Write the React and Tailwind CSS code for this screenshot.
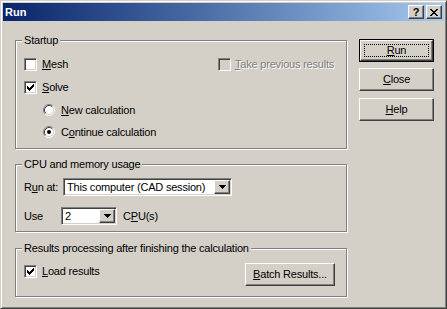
import React from "react";

const raised =
  "border border-t-white border-l-white border-r-[#404040] border-b-[#404040] shadow-[inset_-1px_-1px_0_#808080,inset_1px_1px_0_#d4d0c8]";
const sunken =
  "border border-t-[#808080] border-l-[#808080] border-r-white border-b-white shadow-[inset_1px_1px_0_#404040,inset_-1px_-1px_0_#d4d0c8]";
const group =
  "relative border border-[#808080] shadow-[1px_1px_0_#fff,inset_1px_1px_0_#fff]";

function CheckMark() {
  return (
    <svg width="7" height="7" viewBox="0 0 7 7" shapeRendering="crispEdges">
      <path
        fill="#000"
        d="M6 0h1v1h-1z M5 1h2v1h-2z M0 2h1v1h-1z M4 2h3v1h-3z M0 3h2v1h-2z M3 3h3v1h-3z M0 4h5v1h-5z M1 5h3v1h-3z M2 6h1v1h-1z"
      />
    </svg>
  );
}

function Check({ checked, disabled }) {
  return (
    <div
      className={`w-[13px] h-[13px] shrink-0 flex items-center justify-center ${sunken} ${
        disabled ? "bg-[#d4d0c8]" : "bg-white"
      }`}
    >
      {checked && <CheckMark />}
    </div>
  );
}

function Radio({ checked }) {
  return (
    <svg width="12" height="12" viewBox="0 0 12 12" className="shrink-0">
      <circle cx="6" cy="6" r="4.5" fill="#fff" />
      <path d="M2.11 9.89 A5.5 5.5 0 0 1 9.89 2.11" stroke="#808080" strokeWidth="1" fill="none" />
      <path d="M9.89 2.11 A5.5 5.5 0 0 1 2.11 9.89" stroke="#ffffff" strokeWidth="1" fill="none" />
      <path d="M2.82 9.18 A4.5 4.5 0 0 1 9.18 2.82" stroke="#404040" strokeWidth="1" fill="none" />
      <path d="M9.18 2.82 A4.5 4.5 0 0 1 2.82 9.18" stroke="#d4d0c8" strokeWidth="1" fill="none" />
      {checked && <circle cx="6" cy="6" r="2" fill="#000" />}
    </svg>
  );
}

function Arrow() {
  return (
    <svg width="7" height="4" viewBox="0 0 7 4" shapeRendering="crispEdges">
      <path fill="#000" d="M0 0h7v1h-7z M1 1h5v1h-5z M2 2h3v1h-3z M3 3h1v1h-1z" />
    </svg>
  );
}

function Combo({ width, text }) {
  return (
    <div className={`h-[18px] bg-white flex items-stretch ${sunken}`} style={{ width }}>
      <div className="flex-1 flex items-center pl-[3px] leading-none">{text}</div>
      <div className={`w-[16px] my-[1px] mr-[1px] flex items-center justify-center bg-[#d4d0c8] ${raised}`}>
        <Arrow />
      </div>
    </div>
  );
}

function Legend({ children }) {
  return (
    <span className="absolute left-[6px] top-[-7px] px-[2px] bg-[#d4d0c8] leading-[13px]">
      {children}
    </span>
  );
}

function Button({ children, className = "", isDefault }) {
  if (isDefault) {
    return (
      <div className={`border border-black ${className}`}>
        <div className={`relative h-full flex items-center justify-center ${raised}`}>
          <div className="absolute inset-[3px] border border-dotted border-black" />
          <span>{children}</span>
        </div>
      </div>
    );
  }
  return (
    <div className={`flex items-center justify-center ${raised} ${className}`}>
      <span>{children}</span>
    </div>
  );
}

export default function App() {
  return (
    <div className="w-[447px] h-[309px] bg-[#d4d0c8] border border-t-[#d4d0c8] border-l-[#d4d0c8] border-r-[#404040] border-b-[#404040] shadow-[inset_1px_1px_0_#fff,inset_-1px_-1px_0_#808080] p-[2px] flex flex-col font-['Liberation_Sans',Arial,sans-serif] text-[11px] tracking-[-0.2px] text-black leading-[13px] overflow-hidden">
      {/* Title bar */}
      <div className="h-[18px] shrink-0 flex items-center bg-linear-to-r from-[#0a246a] to-[#a6caf0] pl-[2px] pr-[2px]">
        <span className="text-white font-bold text-[11px] tracking-normal">Run</span>
        <div className="ml-auto flex gap-[2px]">
          <div className={`w-[16px] h-[14px] bg-[#d4d0c8] flex items-center justify-center ${raised}`}>
            <span className="font-bold text-[11px] leading-none">?</span>
          </div>
          <div className={`w-[16px] h-[14px] bg-[#d4d0c8] flex items-center justify-center ${raised}`}>
            <svg width="8" height="7" viewBox="0 0 8 7" shapeRendering="crispEdges">
              <path
                fill="#000"
                d="M0 0h2v1h-2z M6 0h2v1h-2z M1 1h2v1h-2z M5 1h2v1h-2z M2 2h4v1h-4z M3 3h2v1h-2z M2 4h4v1h-4z M1 5h2v1h-2z M5 5h2v1h-2z M0 6h2v1h-2z M6 6h2v1h-2z"
              />
            </svg>
          </div>
        </div>
      </div>

      {/* Body */}
      <div className="flex pl-[12px]">
        {/* Left column */}
        <div className="flex flex-col pt-[19px]">
          {/* Startup */}
          <div className={`${group} w-[332px] h-[109px] pt-[12px] pl-[8px]`}>
            <Legend>Startup</Legend>
            <div className="h-[23px] flex items-center">
              <div className="w-[194px] flex items-center">
                <Check />
                <span className="ml-[5px]">
                  <u>M</u>esh
                </span>
              </div>
              <div className="flex items-center">
                <Check disabled />
                <span className="ml-[4px] text-[#808080] [text-shadow:1px_1px_0_#fff]">
                  <u>T</u>ake previous results
                </span>
              </div>
            </div>
            <div className="h-[23px] flex items-center">
              <Check checked />
              <span className="ml-[5px]">
                <u>S</u>olve
              </span>
            </div>
            <div className="h-[22px] flex items-center pl-[19px]">
              <Radio />
              <span className="ml-[6px]">
                <u>N</u>ew calculation
              </span>
            </div>
            <div className="h-[22px] flex items-center pl-[19px]">
              <Radio checked />
              <span className="ml-[6px]">
                C<u>o</u>ntinue calculation
              </span>
            </div>
          </div>

          {/* CPU */}
          <div className={`${group} w-[332px] h-[68px] mt-[15px] pt-[13px] pl-[8px]`}>
            <Legend>CPU and memory usage</Legend>
            <div className="h-[18px] flex items-center">
              <span className="w-[39px]">
                R<u>u</u>n at:
              </span>
              <Combo width="169px" text="This computer (CAD session)" />
            </div>
            <div className="h-[18px] mt-[11px] flex items-center">
              <span className="w-[37px]">Use</span>
              <Combo width="56px" text="2" />
              <span className="ml-[6px]">
                C<u>P</u>U(s)
              </span>
            </div>
          </div>

          {/* Results */}
          <div className={`${group} w-[332px] h-[49px] mt-[16px] pt-[14px] pl-[8px] pr-[11px] flex justify-between items-start`}>
            <Legend>Results processing after finishing the calculation</Legend>
            <div className="mt-[2px] h-[13px] flex items-center">
              <Check checked />
              <span className="ml-[5px]">
                <u>L</u>oad results
              </span>
            </div>
            <Button className="w-[90px] h-[23px]">
              <u>B</u>atch Results...
            </Button>
          </div>
        </div>

        {/* Right column */}
        <div className="flex flex-col pt-[18px] ml-[12px]">
          <Button isDefault className="w-[75px] h-[23px]">
            <u>R</u>un
          </Button>
          <Button className="w-[75px] h-[23px] mt-[6px]">
            <u>C</u>lose
          </Button>
          <Button className="w-[75px] h-[23px] mt-[7px]">
            <u>H</u>elp
          </Button>
        </div>
      </div>
    </div>
  );
}
